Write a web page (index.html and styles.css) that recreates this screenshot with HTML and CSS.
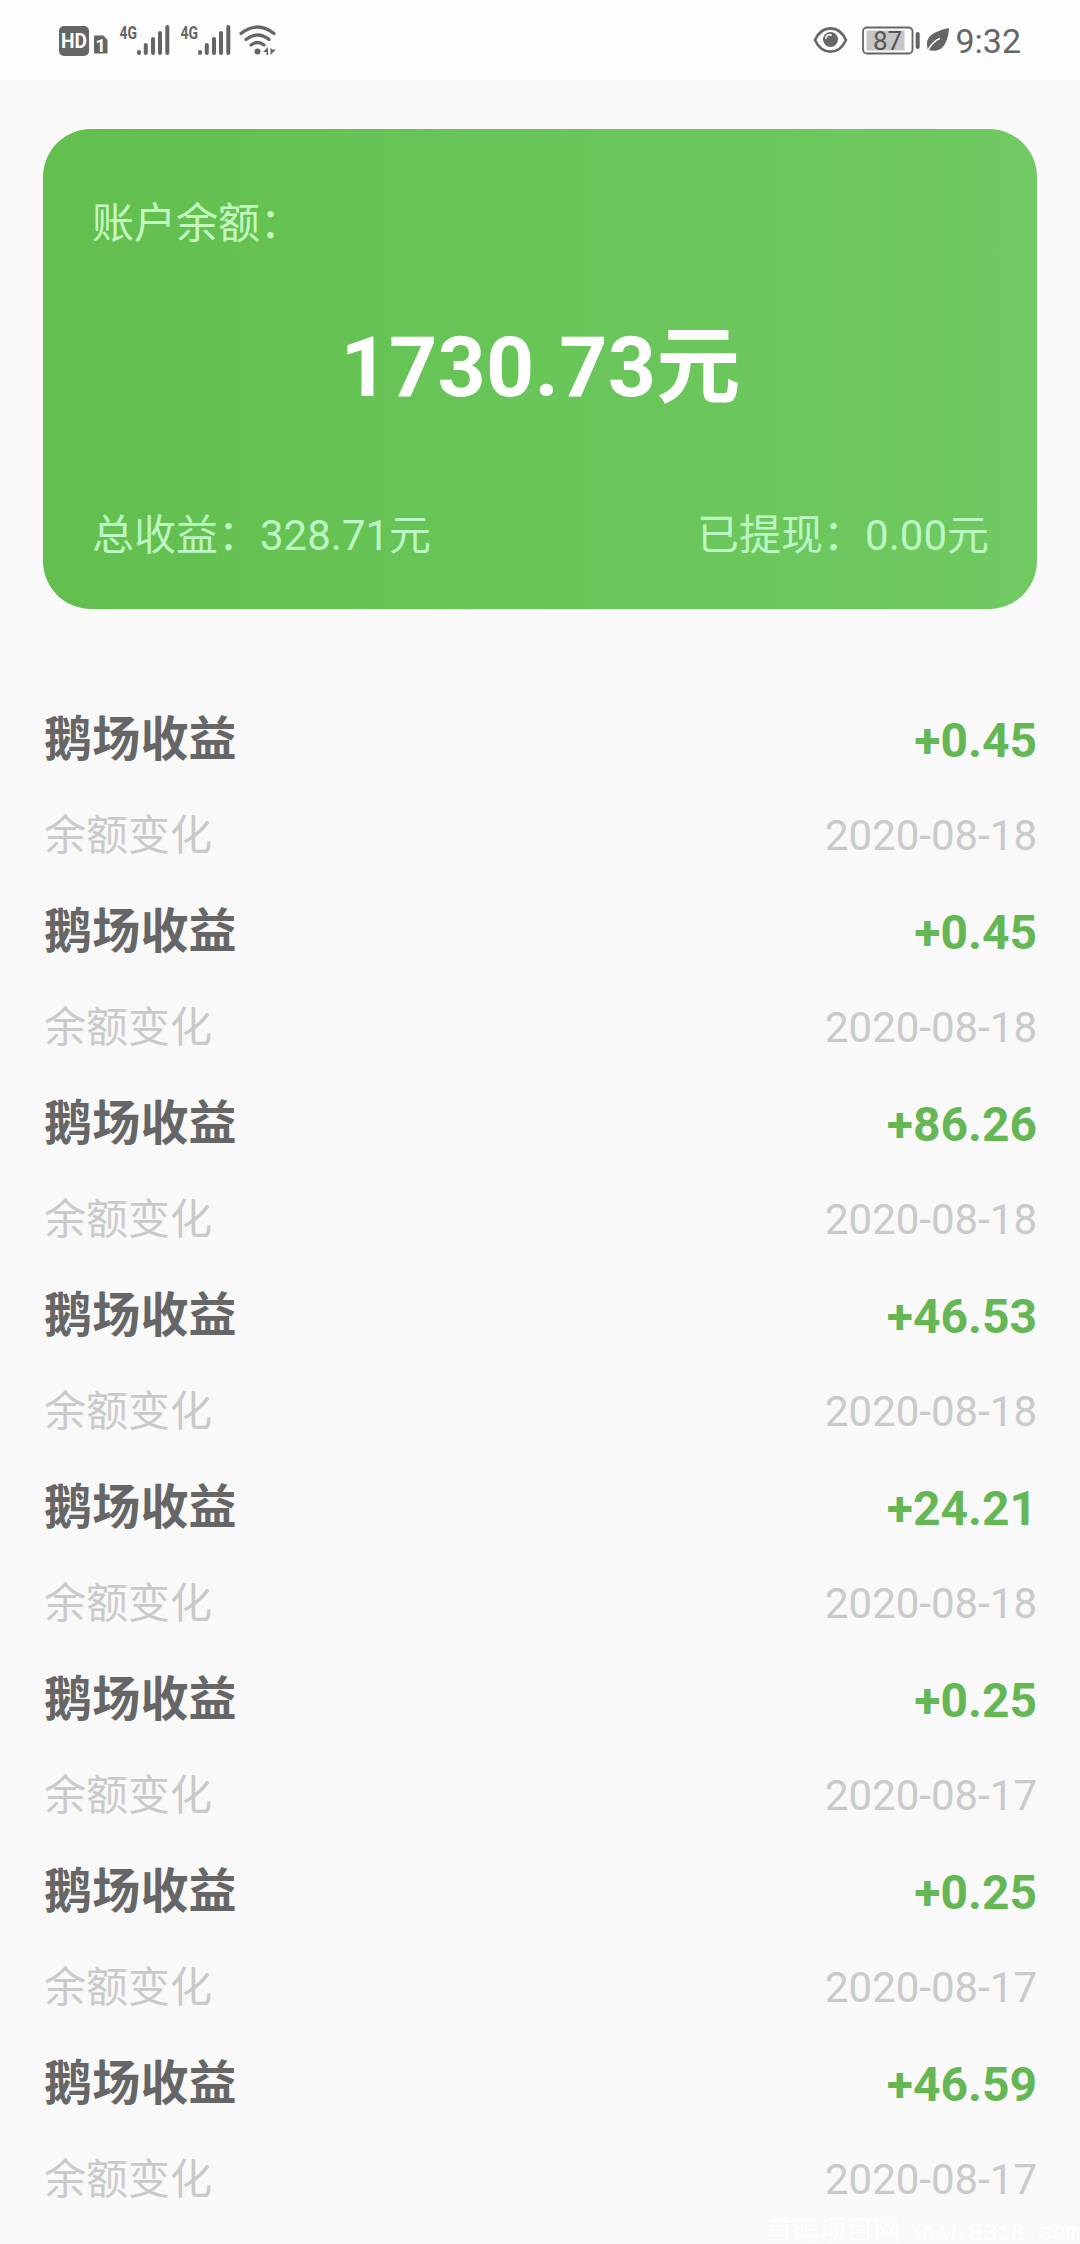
FILE: index.html
```html
<!DOCTYPE html>
<html lang="zh-CN">
<head>
<meta charset="utf-8">
<title>账户余额</title>
<link rel="stylesheet" href="styles.css">
</head>
<body>
<header class="status">
  <svg class="status-left" width="240" height="80" viewBox="40 0 240 80" fill="#656565">
    <rect x="59" y="26" width="30" height="30" rx="5"/>
    <text x="61" y="48" class="hd" textLength="26" lengthAdjust="spacingAndGlyphs">HD</text>
    <path d="M95 36.500h8l3.500 4v12h-11.500z" stroke="#656565" stroke-width="2" stroke-linejoin="round"/>
    <text x="95.500" y="51.500" class="sim">1</text>
    <text x="119.500" y="38.500" class="net" textLength="17.500" lengthAdjust="spacingAndGlyphs">4G</text>
    <g id="bars" stroke="#656565" stroke-width="4" stroke-linecap="round">
      <path d="M139 52v1M145.800 45v8M153 39v14M160 33v20M167.300 27v26"/>
    </g>
    <text x="180.500" y="38.500" class="net" textLength="17.500" lengthAdjust="spacingAndGlyphs">4G</text>
    <use href="#bars" x="61"/>
    <g fill="none" stroke="#656565" stroke-width="3.200" stroke-linecap="round">
      <path d="M241 33.500q16.500-13 33 0M246 39.500q11.500-9 23 0M251 45q6.500-5 13 0"/>
    </g>
    <circle cx="257.500" cy="51.500" r="3"/>
    <path d="M263 52l5-5v8h-1.500v-3zM270.500 47.500v7.500l5.500-5.500h-4z"/>
  </svg>
  <div class="status-right">
    <svg width="140" height="80" viewBox="810 0 140 80" fill="none" stroke="#656565">
      <path d="M815 40C822 24.500 839 24.500 846 40C839 55.500 822 55.500 815 40z" stroke-width="2.600"/>
      <circle cx="830.500" cy="39.500" r="7.500" fill="#656565" stroke="none"/>
      <path d="M826 38q1-4 5-3" stroke="#e8e8e8" stroke-width="2" stroke-linecap="round"/>
      <rect x="863" y="27.500" width="49.500" height="26" rx="4" stroke-width="1.800"/>
      <path d="M866.500 30.500h38v20h-38z" fill="#c6c6c6" stroke="none"/>
      <text x="873" y="49.500" class="level">87</text>
      <path d="M917.700 34v13" stroke-width="4" stroke-linecap="round"/>
      <path d="M949 28C931 32 924 38 928 50C943 54 948 42 949 28z" fill="#656565" stroke="none"/>
      <path d="M928 50q5-9 12-11.500" stroke="#fdfdfd" stroke-width="1.500"/>
    </svg>
    <span class="clock">9:32</span>
  </div>
</header>
<main>
  <section class="card">
    <div class="card-label">账户余额：</div>
    <div class="balance">1730.73元</div>
    <div class="totals"><span>总收益：328.71元</span><span>已提现：0.00元</span></div>
  </section>
  <ul class="records">
    <li><b>鹅场收益</b><strong>+0.45</strong><span>余额变化</span><time>2020-08-18</time></li>
    <li><b>鹅场收益</b><strong>+0.45</strong><span>余额变化</span><time>2020-08-18</time></li>
    <li><b>鹅场收益</b><strong>+86.26</strong><span>余额变化</span><time>2020-08-18</time></li>
    <li><b>鹅场收益</b><strong>+46.53</strong><span>余额变化</span><time>2020-08-18</time></li>
    <li><b>鹅场收益</b><strong>+24.21</strong><span>余额变化</span><time>2020-08-18</time></li>
    <li><b>鹅场收益</b><strong>+0.25</strong><span>余额变化</span><time>2020-08-17</time></li>
    <li><b>鹅场收益</b><strong>+0.25</strong><span>余额变化</span><time>2020-08-17</time></li>
    <li><b>鹅场收益</b><strong>+46.59</strong><span>余额变化</span><time>2020-08-17</time></li>
  </ul>
</main>
<div class="watermark"><span>首码项目网</span> www.E318.com</div>
</body>
</html>
```
FILE: styles.css
```css
* { box-sizing: border-box; margin: 0; padding: 0; }
body {
  position: relative;
  width: 1080px;
  height: 2244px;
  overflow: hidden;
  background: #f9f9f9;
  font-family: Roboto, "Noto Sans CJK SC", sans-serif;
}
.status {
  display: flex;
  justify-content: space-between;
  height: 80px;
  padding: 0 59px 0 40px;
  background: #fdfdfd;
}
.status-right { display: flex; }
.hd { font: 700 21px Roboto, sans-serif; fill: #fff; }
.sim { font: 700 18px Roboto, sans-serif; fill: #fff; }
.net { font: 700 19px Roboto, sans-serif; }
.level { font: 400 26px Roboto, sans-serif; fill: #555; stroke: none; }
.clock {
  padding-left: 5px;
  font-size: 34px;
  line-height: 82px;
  color: #656565;
}
main { padding: 49px 43px 0; }
.card {
  display: flex;
  flex-direction: column;
  height: 480px;
  padding: 65px 48px 43px 49px;
  border-radius: 48px;
  background: linear-gradient(90deg, #62be4d, #68c558 50%, #70c962);
  color: #c5f8c0;
  font-size: 42px;
  line-height: 60px;
}
.balance {
  margin-top: 64px;
  font-size: 84px;
  font-weight: 700;
  line-height: 100px;
  letter-spacing: 0.3px;
  text-align: center;
  color: #fff;
}
.totals {
  display: flex;
  justify-content: space-between;
  margin-top: auto;
  color: #bbf6c4;
}
.records { list-style: none; padding-top: 83px; }
.records li {
  display: grid;
  grid-template-columns: 1fr auto;
  grid-template-rows: 96px 96px;
  line-height: 96px;
  font-size: 42px;
  color: #cacaca;
}
.records b { padding-left: 1px; font-size: 48px; letter-spacing: 0.2px; color: #666; }
.records span { padding-left: 1px; }
.records strong { padding-top: 1px; font-size: 48px; color: #65b655; text-align: right; }
.records time { text-align: right; }
.watermark {
  position: absolute;
  right: 0;
  bottom: -7px;
  font: 23px/34px "Liberation Mono", "Noto Sans CJK SC", monospace;
  white-space: pre;
  color: #fff;
}
.watermark span { font: 300 27px/34px "Noto Sans CJK SC", sans-serif; }
```
